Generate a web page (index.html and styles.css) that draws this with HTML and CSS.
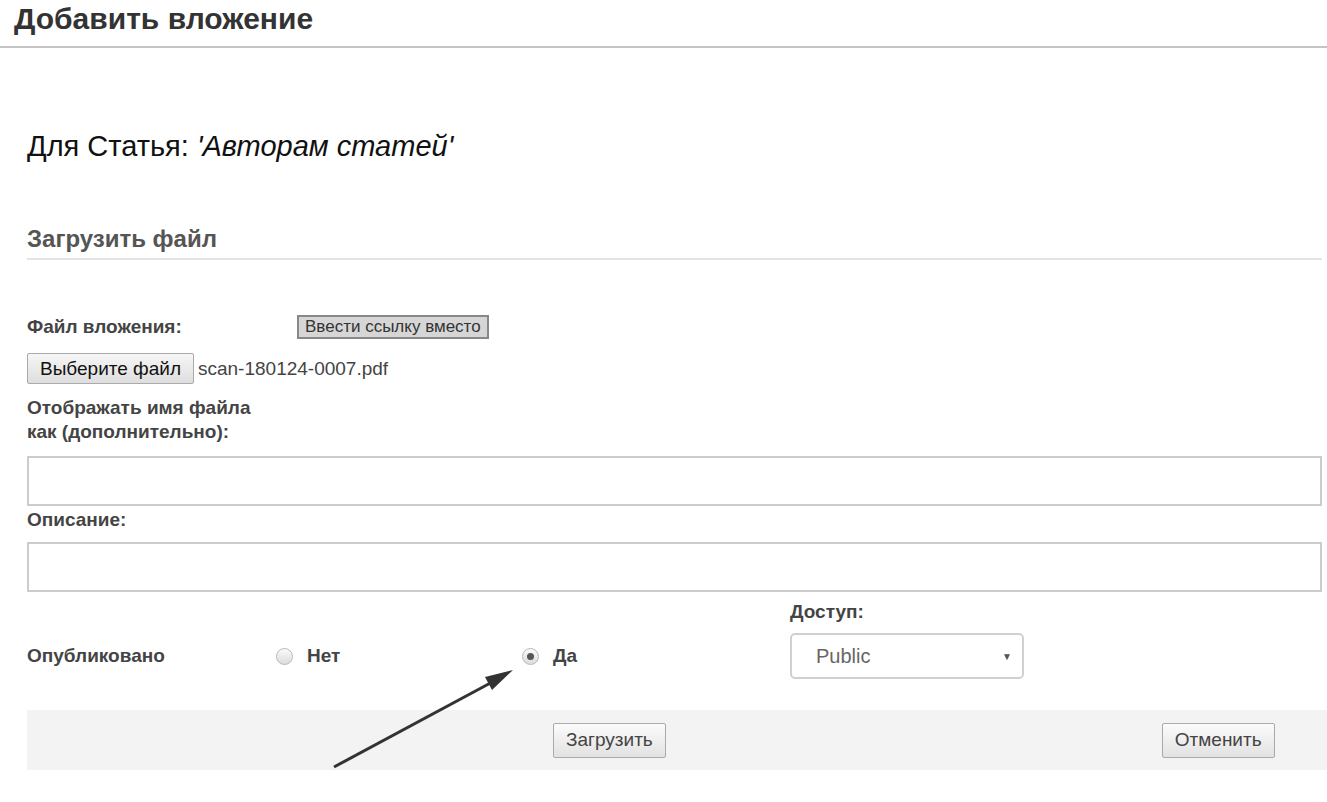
FILE: index.html
```html
<!DOCTYPE html>
<html lang="ru">
<head>
  <meta charset="UTF-8">
  <title>Добавить вложение</title>
  <link rel="stylesheet" href="styles.css">
</head>
<body>
  <!-- Заголовок -->
  <div class="page-header">
    <h1>Добавить вложение</h1>
  </div>

  <div class="content">
    <h2 class="for-item">Для Статья: <em>'Авторам статей'</em></h2>

    <h3 class="section-title">Загрузить файл</h3>

    <form class="attach-form">
      <div class="file-row">
        <label class="field-label">Файл вложения:</label>
        <button type="button" class="link-btn">Ввести ссылку вместо</button>
      </div>

      <div class="file-pick">
        <button type="button" class="pick-btn">Выберите файл</button>
        <span class="file-name">scan-180124-0007.pdf</span>
      </div>

      <label class="field-label wrap">Отображать имя файла как (дополнительно):</label>
      <input type="text" class="text-input">

      <label class="field-label desc-label">Описание:</label>
      <input type="text" class="text-input">

      <div class="publish-grid">
        <div></div><div></div><div></div>
        <label class="field-label access-label">Доступ:</label>
        <span class="field-label">Опубликовано</span>
        <label class="radio"><input type="radio" name="pub"> Нет</label>
        <label class="radio"><input type="radio" name="pub" checked> Да</label>
        <div class="select">
          <span>Public</span>
          <span class="caret">&#9660;</span>
        </div>
      </div>

      <div class="actions">
        <button type="button" class="btn upload-btn">Загрузить</button>
        <button type="button" class="btn cancel-btn">Отменить</button>
      </div>
    </form>
  </div>

  <!-- стрелка-подсказка -->
  <svg class="pointer-arrow" width="1327" height="802" viewBox="0 0 1327 802">
    <line x1="334" y1="767" x2="496" y2="680" stroke="#333" stroke-width="3"/>
    <polygon points="513,670 485,677 492,690" fill="#333"/>
  </svg>
</body>
</html>
```

FILE: styles.css
```css
body {
  font-family: "Liberation Sans", Arial, sans-serif;
  margin: 0;
  padding: 0;
  color: #333;
  background: #fff;
}
.page-header {
  border-bottom: 2px solid #c4c4c4;
  padding: 2px 0 0 14px;
  height: 48px;
  box-sizing: border-box;
}
.page-header h1 {
  margin: 0;
  font-size: 30px;
  line-height: 34px;
  color: #333;
}
.content {
  padding: 0 5px 0 27px;
}
.for-item {
  margin: 81px 0 0;
  font-size: 29px;
  line-height: 34px;
  font-weight: normal;
  color: #111;
}
.section-title {
  margin: 63px 0 0;
  padding-bottom: 6px;
  font-size: 24px;
  line-height: 26px;
  color: #555;
  border-bottom: 2px solid #e4e4e4;
}
.attach-form {
  margin-top: 55px;
}
.field-label {
  display: block;
  font-size: 19px;
  font-weight: bold;
  line-height: 24px;
  color: #444;
}
.field-label.wrap {
  width: 245px;
  margin-top: 12px;
}
.file-row {
  display: flex;
  align-items: center;
}
.file-row .field-label {
  width: 270px;
}
.link-btn {
  font-family: inherit;
  font-size: 17px;
  line-height: 20px;
  color: #333;
  background: #d6d6d6;
  border: 2px solid #888;
  padding: 0 6px;
  height: 24px;
}
.file-pick {
  display: flex;
  align-items: center;
  margin-top: 14px;
}
.pick-btn {
  font-family: inherit;
  font-size: 19px;
  color: #111;
  background: linear-gradient(#f6f6f6, #dedede);
  border: 1px solid #aaa;
  border-radius: 2px;
  height: 31px;
  padding: 0 12px;
}
.file-name {
  font-size: 19px;
  color: #444;
  margin-left: 4px;
}
.text-input {
  display: block;
  box-sizing: border-box;
  width: 100%;
  height: 50px;
  border: 2px solid #ccc;
  margin: 12px 0 0;
}
.desc-label {
  margin-top: 2px;
}
.desc-label + .text-input {
  margin-top: 10px;
}
.publish-grid {
  display: grid;
  grid-template-columns: 249px 246px 268px 234px;
  align-items: center;
  margin-top: 8px;
}
.access-label {
  margin-bottom: 9px;
}
.radio {
  display: flex;
  align-items: center;
  font-size: 19px;
  font-weight: bold;
  color: #444;
}
.radio input {
  appearance: none;
  -webkit-appearance: none;
  width: 17px;
  height: 17px;
  margin: 0 14px 0 0;
  border: 1px solid #b8b8b8;
  border-radius: 50%;
  background: linear-gradient(#fafafa, #dcdcdc);
  position: relative;
}
.radio input:checked::after {
  content: "";
  position: absolute;
  left: 4px;
  top: 4px;
  width: 7px;
  height: 7px;
  border-radius: 50%;
  background: #555;
}
.select {
  box-sizing: border-box;
  height: 46px;
  border: 2px solid #d0d0d0;
  border-radius: 5px;
  display: flex;
  align-items: center;
  justify-content: space-between;
  padding: 0 10px 0 24px;
  font-size: 20px;
  color: #666;
}
.select .caret {
  font-size: 10px;
  color: #555;
}
.actions {
  background: #f3f3f3;
  height: 60px;
  margin: 31px -5px 0 0;
  display: flex;
  align-items: center;
}
.btn {
  font-family: inherit;
  font-size: 19px;
  color: #444;
  background: linear-gradient(#fbfbfb, #e2e2e2);
  border: 1px solid #aaa;
  border-radius: 2px;
  height: 35px;
  padding: 0 12px;
}
.upload-btn {
  margin-left: 526px;
}
.cancel-btn {
  margin-left: 496px;
}
.pointer-arrow {
  position: absolute;
  left: 0;
  top: 0;
  pointer-events: none;
}
```
